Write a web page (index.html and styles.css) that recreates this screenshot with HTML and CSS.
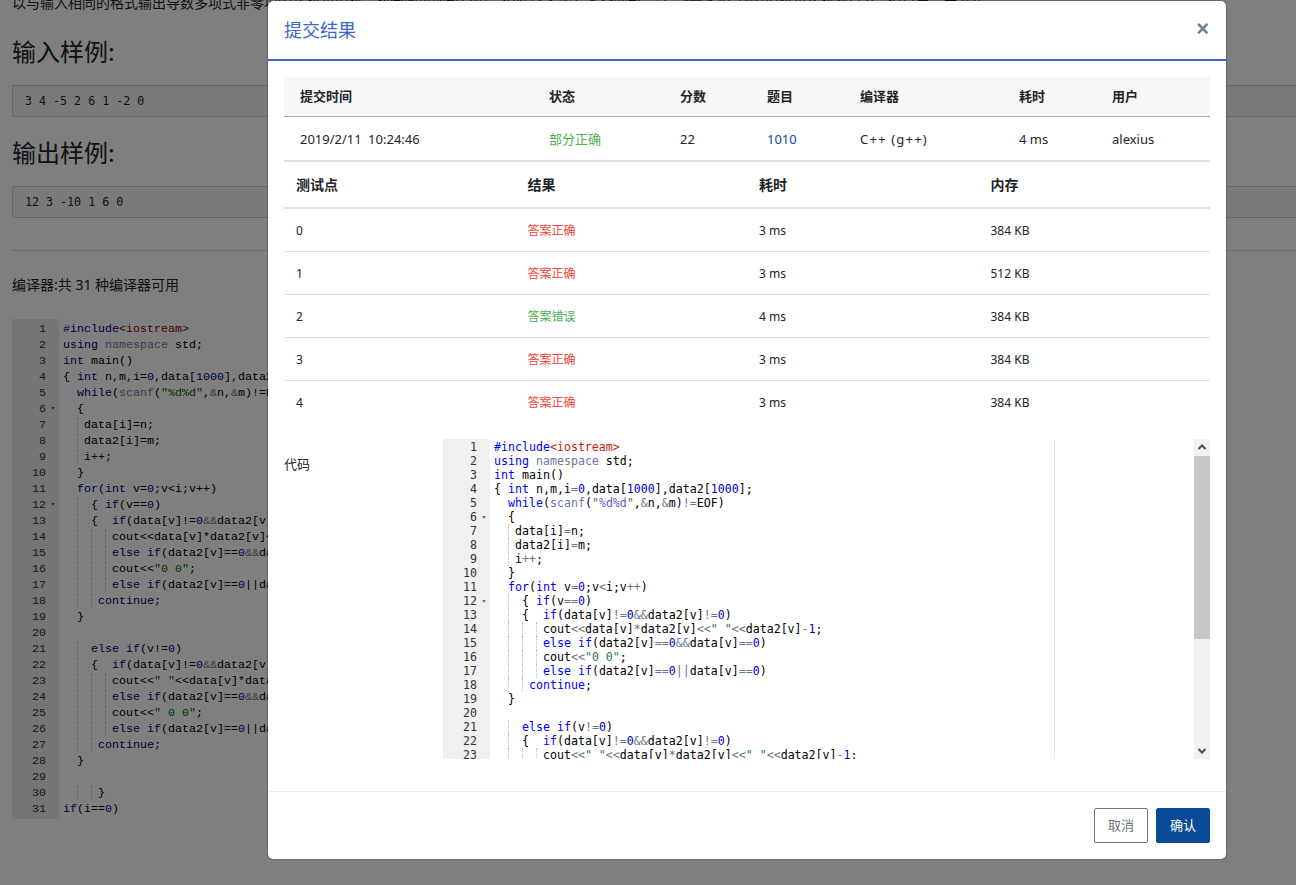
FILE: index.html
```html
<!DOCTYPE html>
<html lang="zh-CN">
<head>
<meta charset="utf-8">
<title>提交结果</title>
<link rel="stylesheet" href="styles.css">
</head>
<body>
<main class="page">
  <p class="intro">以与输入相同的格式输出导数多项式非零项的系数和指数。数字间以空格分隔，但结尾不能有多余空格。注意“零多项式”的指数和系数都是 0，但是表示为 0 0。</p>
  <h3 class="sample-title first">输入样例:</h3>
  <pre class="sample">3 4 -5 2 6 1 -2 0</pre>
  <h3 class="sample-title">输出样例:</h3>
  <pre class="sample">12 3 -10 1 6 0</pre>
  <hr class="rule">
  <p class="compiler">编译器:共 31 种编译器可用</p>
  <div class="bg-editor">
    <div class="gutter"><div>1</div><div>2</div><div>3</div><div>4</div><div>5</div><div class="fold">6</div><div>7</div><div>8</div><div>9</div><div>10</div><div>11</div><div class="fold">12</div><div>13</div><div>14</div><div>15</div><div>16</div><div>17</div><div>18</div><div>19</div><div>20</div><div>21</div><div>22</div><div>23</div><div>24</div><div>25</div><div>26</div><div>27</div><div>28</div><div>29</div><div>30</div><div>31</div><div>32</div></div>
    <pre class="lines"><span class="k">#include</span><span class="r">&lt;iostream&gt;</span>
<span class="k">using</span> <span class="f">namespace</span> std;
<span class="k">int</span> main()
{ <span class="k">int</span> n,m,i=<span class="n">0</span>,data[<span class="n">1000</span>],data2[<span class="n">1000</span>];
  <span class="k">while</span>(<span class="f">scanf</span>(<span class="s">"%d%d"</span>,<span class="o">&amp;</span>n,<span class="o">&amp;</span>m)!=EOF)
  {
<i>  </i> data[i]=n;
<i>  </i> data2[i]=m;
<i>  </i> i++;
  }
  <span class="k">for</span>(<span class="k">int</span> v=<span class="n">0</span>;v&lt;i;v++)
<i>  </i>  { <span class="k">if</span>(v==<span class="n">0</span>)
<i>  </i>  {  <span class="k">if</span>(data[v]!=<span class="n">0</span><span class="o">&amp;&amp;</span>data2[v]!=<span class="n">0</span>)
<i>  </i><i>  </i><i>  </i> cout&lt;&lt;data[v]*data2[v]&lt;&lt;<span class="s">" "</span>&lt;&lt;data2[v]-<span class="n">1</span>;
<i>  </i><i>  </i><i>  </i> <span class="k">else if</span>(data2[v]==<span class="n">0</span><span class="o">&amp;&amp;</span>data[v]==<span class="n">0</span>)
<i>  </i><i>  </i><i>  </i> cout&lt;&lt;<span class="s">"0 0"</span>;
<i>  </i><i>  </i><i>  </i> <span class="k">else if</span>(data2[v]==<span class="n">0</span>||data[v]==<span class="n">0</span>)
<i>  </i><i>  </i> <span class="k">continue</span>;
  }

<i>  </i>  <span class="k">else if</span>(v!=<span class="n">0</span>)
<i>  </i>  {  <span class="k">if</span>(data[v]!=<span class="n">0</span><span class="o">&amp;&amp;</span>data2[v]!=<span class="n">0</span>)
<i>  </i><i>  </i><i>  </i> cout&lt;&lt;<span class="s">" "</span>&lt;&lt;data[v]*data2[v]&lt;&lt;<span class="s">" "</span>&lt;&lt;data2[v]-<span class="n">1</span>;
<i>  </i><i>  </i><i>  </i> <span class="k">else if</span>(data2[v]==<span class="n">0</span><span class="o">&amp;&amp;</span>data[v]==<span class="n">0</span>)
<i>  </i><i>  </i><i>  </i> cout&lt;&lt;<span class="s">" 0 0"</span>;
<i>  </i><i>  </i><i>  </i> <span class="k">else if</span>(data2[v]==<span class="n">0</span>||data[v]==<span class="n">0</span>)
<i>  </i><i>  </i> <span class="k">continue</span>;
  }

<i>  </i><i>  </i> }
<span class="k">if</span>(i==<span class="n">0</span>)
cout&lt;&lt;<span class="s">"0 0"</span>;</pre>
  </div>
</main>

<div class="overlay"></div>

<section class="modal">
  <header class="modal-head">
    <h2 class="modal-title">提交结果</h2>
    <span class="close">×</span>
  </header>
  <div class="modal-body">
    <table class="summary">
      <colgroup><col class="s1"><col class="s2"><col class="s3"><col class="s4"><col class="s5"><col class="s6"><col class="s7"></colgroup>
      <thead><tr><th>提交时间</th><th>状态</th><th>分数</th><th>题目</th><th>编译器</th><th>耗时</th><th>用户</th></tr></thead>
      <tbody><tr><td class="when">2019/2/11 10:24:46</td><td class="green">部分正确</td><td>22</td><td class="link">1010</td><td class="lang">C++ (g++)</td><td>4 ms</td><td>alexius</td></tr></tbody>
    </table>
    <table class="cases">
      <thead><tr><th>测试点</th><th>结果</th><th>耗时</th><th>内存</th></tr></thead>
      <tbody>
        <tr><td>0</td><td class="red">答案正确</td><td>3 ms</td><td>384 KB</td></tr>
        <tr><td>1</td><td class="red">答案正确</td><td>3 ms</td><td>512 KB</td></tr>
        <tr><td>2</td><td class="green">答案错误</td><td>4 ms</td><td>384 KB</td></tr>
        <tr><td>3</td><td class="red">答案正确</td><td>3 ms</td><td>384 KB</td></tr>
        <tr><td>4</td><td class="red">答案正确</td><td>3 ms</td><td>384 KB</td></tr>
      </tbody>
    </table>
    <div class="code-row">
      <div class="code-label">代码</div>
      <div class="editor">
        <div class="gutter"><div>1</div><div>2</div><div>3</div><div>4</div><div>5</div><div class="fold">6</div><div>7</div><div>8</div><div>9</div><div>10</div><div>11</div><div class="fold">12</div><div>13</div><div>14</div><div>15</div><div>16</div><div>17</div><div>18</div><div>19</div><div>20</div><div>21</div><div>22</div><div>23</div></div>
        <pre class="lines"><span class="k">#include</span><span class="r">&lt;iostream&gt;</span>
<span class="k">using</span> <span class="f">namespace</span> std;
<span class="k">int</span> main()
{ <span class="k">int</span> n,m,i<span class="o">=</span><span class="n">0</span>,data[<span class="n">1000</span>],data2[<span class="n">1000</span>];
  <span class="k">while</span>(<span class="f">scanf</span>(<span class="s">"<span class="fmt">%d%d</span>"</span>,<span class="o">&amp;</span>n,<span class="o">&amp;</span>m)<span class="o">!=</span>EOF)
  {
<i>  </i> data[i]<span class="o">=</span>n;
<i>  </i> data2[i]<span class="o">=</span>m;
<i>  </i> i<span class="o">++</span>;
  }
  <span class="k">for</span>(<span class="k">int</span> v<span class="o">=</span><span class="n">0</span>;v<span class="o">&lt;</span>i;v<span class="o">++</span>)
<i>  </i>  { <span class="k">if</span>(v<span class="o">==</span><span class="n">0</span>)
<i>  </i>  {  <span class="k">if</span>(data[v]<span class="o">!=</span><span class="n">0</span><span class="o">&amp;&amp;</span>data2[v]<span class="o">!=</span><span class="n">0</span>)
<i>  </i><i>  </i><i>  </i> cout<span class="o">&lt;&lt;</span>data[v]<span class="o">*</span>data2[v]<span class="o">&lt;&lt;</span><span class="s">" "</span><span class="o">&lt;&lt;</span>data2[v]<span class="o">-</span><span class="n">1</span>;
<i>  </i><i>  </i><i>  </i> <span class="k">else if</span>(data2[v]<span class="o">==</span><span class="n">0</span><span class="o">&amp;&amp;</span>data[v]<span class="o">==</span><span class="n">0</span>)
<i>  </i><i>  </i><i>  </i> cout<span class="o">&lt;&lt;</span><span class="s">"0 0"</span>;
<i>  </i><i>  </i><i>  </i> <span class="k">else if</span>(data2[v]<span class="o">==</span><span class="n">0</span><span class="o">||</span>data[v]<span class="o">==</span><span class="n">0</span>)
<i>  </i><i>  </i> <span class="k">continue</span>;
  }

<i>  </i>  <span class="k">else if</span>(v<span class="o">!=</span><span class="n">0</span>)
<i>  </i>  {  <span class="k">if</span>(data[v]<span class="o">!=</span><span class="n">0</span><span class="o">&amp;&amp;</span>data2[v]<span class="o">!=</span><span class="n">0</span>)
<i>  </i><i>  </i><i>  </i> cout<span class="o">&lt;&lt;</span><span class="s">" "</span><span class="o">&lt;&lt;</span>data[v]<span class="o">*</span>data2[v]<span class="o">&lt;&lt;</span><span class="s">" "</span><span class="o">&lt;&lt;</span>data2[v]<span class="o">-</span><span class="n">1</span>;</pre>
        <div class="print-margin"></div>
        <div class="scrollbar">
          <svg class="arrow" viewBox="0 0 16 17" width="16" height="17"><path d="M4.5 10 8 6.5 11.5 10" fill="none" stroke="#505050" stroke-width="2"/></svg>
          <div class="track"><div class="thumb"></div></div>
          <svg class="arrow" viewBox="0 0 16 17" width="16" height="17"><path d="M4.5 7 8 10.5 11.5 7" fill="none" stroke="#505050" stroke-width="2"/></svg>
        </div>
      </div>
    </div>
  </div>
  <footer class="modal-foot">
    <button class="btn cancel">取消</button>
    <button class="btn ok">确认</button>
  </footer>
</section>
</body>
</html>
```
FILE: styles.css
```css
* { box-sizing: border-box; }
html, body { margin: 0; height: 885px; overflow: hidden; }
body {
  background: #fff;
  color: #212529;
  font: 14px/21px "Noto Sans", "Noto Sans CJK SC", sans-serif;
}
.page { height: 885px; padding: 0 0 0 12px; overflow: hidden; }
.intro { margin: -8px 0 0; white-space: nowrap; font-size: 14px; line-height: 21px; }
.sample-title { margin: 20px 0 0; font-weight: 400; font-size: 24px; line-height: 29px; font-family: "Noto Sans CJK SC", sans-serif; }
.sample-title.first { margin-top: 23px; }
.sample {
  margin: 20px 0 0;
  height: 32px;
  padding: 0 12px;
  background: #f5f5f5;
  border: 1px solid #ccc;
  border-right: 0;
  border-radius: 3px 0 0 3px;
  font: 11.67px/30px "DejaVu Sans Mono", monospace;
  color: #212529;
}
.rule { margin: 32px 0 0; border: 0; border-top: 1px solid #d8d8d8; }
.compiler { margin: 23px 0 0; font-size: 14px; line-height: 21px; }
.bg-editor { display: flex; margin-top: 24px; width: 256px; height: 500px; overflow: hidden; background: #fff; }
.bg-editor .gutter { flex: 0 0 47px; padding-top: 2px; background: #ebebeb; font: 11.67px/16px "Liberation Mono", monospace; }
.bg-editor .lines { padding-top: 2px; font: 11.67px/16px "Liberation Mono", monospace; color: #000; }
.bg-editor .k { color: #00008b; }
.bg-editor .s { color: #006400; }
.bg-editor .r { color: #8b0000; }
.bg-editor .n { color: #00008b; }

.gutter { padding-right: 13px; text-align: right; color: #333; position: relative; }
.gutter .fold { position: relative; }
.gutter .fold::after {
  content: "";
  position: absolute;
  right: -9px;
  top: 6px;
  border: 2.5px solid transparent;
  border-top: 3px solid #777;
  border-bottom: 0;
}
.lines { margin: 0 0 0 4px; white-space: pre; flex: 1; overflow: hidden; }
.lines i { font-style: normal; border-right: 1px dotted #bbb; margin-right: -1px; }

.overlay { position: absolute; inset: 0; background: rgba(0, 0, 0, .5); }

.modal {
  position: absolute;
  left: 268px;
  top: 1px;
  width: 958px;
  height: 858px;
  background: #fff;
  border-radius: 5px;
  display: flex;
  flex-direction: column;
  box-shadow: 0 0 2px rgba(0, 0, 0, .6);
}
.modal-head {
  flex: 0 0 60px;
  display: flex;
  align-items: center;
  justify-content: space-between;
  padding: 0 16px;
  border-bottom: 2px solid #3a68c8;
}
.modal-title { margin: 0 0 1px; font-size: 18px; font-weight: 400; color: #3a68c8; font-family: "Noto Sans CJK SC", sans-serif; line-height: 27px; }
.close { color: #6f7f8c; font-size: 22px; font-weight: 700; line-height: 22px; margin: 0 1px 3px 0; font-family: "Liberation Sans", sans-serif; }
.modal-body { flex: 1; padding: 16px 16px 0; overflow: hidden; }

table { width: 100%; border-collapse: collapse; table-layout: fixed; color: #212529; font-size: 13px; }
th { font-weight: 700; text-align: left; }
.s1 { width: 249px; }
.s2 { width: 131px; }
.s3 { width: 87px; }
.s4 { width: 93px; }
.s5 { width: 159px; }
.s6 { width: 93px; }
.summary th { height: 39px; padding: 0 16px; background: #f7f7f7; border-bottom: 1px solid #aaa; }
.summary td { height: 45px; padding: 3px 16px 0; border-bottom: 2px solid #e2e2e2; }
.when { word-spacing: 3px; }
.lang { letter-spacing: 1.2px; }
.cases th { height: 46px; padding: 0 12px 1px; border-bottom: 2px solid #dee2e6; font-size: 14px; }
.cases td { height: 43px; padding: 2px 12px 0; border-bottom: 1px solid #dee2e6; font-size: 12px; }
.cases tr:last-child td { border-bottom: 0; }
.green { color: #4caf50; }
.red { color: #f44336; }
.link { color: #0a4a96; }

.code-row { display: flex; margin-top: 16px; }
.code-label { flex: 0 0 159px; padding-top: 15px; font-size: 13px; color: #212529; }
.editor { position: relative; flex: 1; display: flex; height: 320px; overflow: hidden; background: #fff; }
.editor .gutter { flex: 0 0 47px; padding-top: 1px; background: #f0f0f0; font: 11.62px/14px "DejaVu Sans Mono", monospace; }
.editor .lines { padding-top: 1px; font: 11.62px/14px "DejaVu Sans Mono", monospace; color: #000; }
.k { color: #0000ff; }
.f { color: #6d79a0; }
.s { color: #1f7a3a; }
.fmt { color: #6a5acd; }
.r { color: #c41a16; }
.n { color: #0000cd; }
.o { color: #687687; }
.print-margin { position: absolute; left: 611px; top: 0; bottom: 0; width: 1px; background: #e8e8e8; }
.scrollbar { flex: 0 0 16px; display: flex; flex-direction: column; background: #f1f1f1; }
.arrow { display: block; flex: 0 0 17px; }
.track { flex: 1; }
.thumb { height: 183px; background: #c8c8c8; }

.modal-foot {
  flex: 0 0 68px;
  display: flex;
  justify-content: flex-end;
  gap: 8px;
  padding: 16px 16px 0;
  border-top: 1px solid #eee;
}
.btn { width: 54px; height: 35px; border-radius: 2px; font: 13px "Noto Sans CJK SC", sans-serif; padding: 0 0 2px; }
.cancel { background: #fff; border: 1px solid #6c757d; color: #6c757d; }
.ok { background: #0a4a96; border: 1px solid #0a4a96; color: #fff; }
```
